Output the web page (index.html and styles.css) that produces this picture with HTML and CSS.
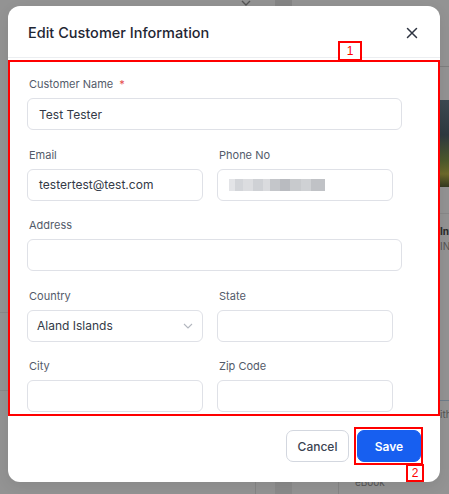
FILE: index.html
```html
<!DOCTYPE html>
<html lang="en">
<head>
<meta charset="utf-8">
<title>Edit Customer Information</title>
<link rel="stylesheet" href="styles.css">
</head>
<body>
<div class="backdrop">
  <div class="bg-top-chevron"><svg width="10" height="6" viewBox="0 0 10 6"><path d="M1 1l4 4 4-4" fill="none" stroke="#555" stroke-width="1.4"/></svg></div>
  <div class="bg-top-square"></div>
  <div class="bg-right-line1"></div>
  <div class="bg-right-image"></div>
  <div class="bg-right-line2"></div>
  <div class="bg-right-text1">Inv</div>
  <div class="bg-right-text2">IN</div>
  <div class="bg-right-line3"></div>
  <div class="bg-right-text3">ith</div>
  <div class="bg-left-line1"></div>
  <div class="bg-left-line2"></div>
  <div class="bg-bottom-col1"></div>
  <div class="bg-bottom-col2"></div>
  <div class="bg-bottom-line"></div>
  <div class="bg-bottom-text">eBook</div>
</div>

<div class="modal">
  <div class="modal-header">
    <h2 class="modal-title">Edit Customer Information</h2>
    <button class="close-btn" aria-label="Close">
      <svg width="12" height="12" viewBox="0 0 12 12"><path d="M1.5 1.5l9 9M10.5 1.5l-9 9" stroke="#2f3542" stroke-width="1.5" stroke-linecap="round"/></svg>
    </button>
  </div>
  <div class="modal-body">
    <div class="field">
      <label class="label">Customer Name <span class="req">*</span></label>
      <div class="input full">Test Tester</div>
    </div>
    <div class="row">
      <div class="field">
        <label class="label">Email</label>
        <div class="input">testertest@test.com</div>
      </div>
      <div class="field">
        <label class="label">Phone No</label>
        <div class="input"><span class="blur"></span></div>
      </div>
    </div>
    <div class="field">
      <label class="label">Address</label>
      <div class="input full"></div>
    </div>
    <div class="row">
      <div class="field">
        <label class="label">Country</label>
        <div class="input select">Aland Islands
          <svg class="chev" width="10" height="6" viewBox="0 0 10 6"><path d="M1 1l4 4 4-4" fill="none" stroke="#b3b7bf" stroke-width="1.1"/></svg>
        </div>
      </div>
      <div class="field">
        <label class="label">State</label>
        <div class="input"></div>
      </div>
    </div>
    <div class="row">
      <div class="field">
        <label class="label">City</label>
        <div class="input"></div>
      </div>
      <div class="field">
        <label class="label">Zip Code</label>
        <div class="input"></div>
      </div>
    </div>
  </div>
  <div class="modal-footer">
    <button class="btn btn-cancel">Cancel</button>
    <button class="btn btn-save">Save</button>
  </div>
</div>

<div class="anno anno-box1"></div>
<div class="anno anno-tag1">1</div>
<div class="anno anno-box2"></div>
<div class="anno anno-tag2">2</div>
</body>
</html>
```
FILE: styles.css
```css
* { box-sizing: border-box; }
html, body { margin: 0; padding: 0; }
body {
  width: 449px;
  height: 494px;
  overflow: hidden;
  background: #939393;
  font-family: Inter, "Noto Sans", sans-serif;
  position: relative;
}

/* obscured page behind the overlay */
.backdrop { position: absolute; inset: 0; }
.backdrop > * { position: absolute; }
.bg-top-chevron { left: 241px; top: 0; line-height: 0; }
.bg-top-square { left: 275px; top: 0; width: 17px; height: 6px; background: #858585; }
.bg-right-line1 { left: 440px; top: 66px; width: 9px; height: 1px; background: #7e7e7e; }
.bg-right-image { left: 440px; top: 100px; width: 9px; height: 87px;
  background: linear-gradient(180deg, #3d4a52 0%, #2e3a40 40%, #4d5a2c 70%, #6d6a2a 85%, #33381f 100%); }
.bg-right-line2 { left: 440px; top: 213px; width: 9px; height: 1px; background: #888; }
.bg-right-text1 { left: 440px; top: 225px; font: bold 10px Inter, sans-serif; color: #2a2a2a; }
.bg-right-text2 { left: 440px; top: 240px; font: 10px Inter, sans-serif; color: #555; }
.bg-right-line3 { left: 440px; top: 400px; width: 9px; height: 1px; background: #6f7c8a; }
.bg-right-text3 { left: 440px; top: 408px; font: 10px Inter, sans-serif; color: #555; }
.bg-left-line1 { left: 0; top: 312px; width: 8px; height: 1px; background: #888; }
.bg-left-line2 { left: 0; top: 390px; width: 8px; height: 1px; background: #888; }
.bg-bottom-col1 { left: 255px; top: 482px; width: 1px; height: 12px; background: #858585; }
.bg-bottom-col2 { left: 275px; top: 482px; width: 17px; height: 12px; background: #8a8a8a; }
.bg-bottom-line { left: 338px; top: 482px; width: 1px; height: 12px; background: #858585; }
.bg-bottom-text { left: 355px; top: 476px; font: 10px Inter, sans-serif; color: #555; }

/* modal */
.modal {
  position: absolute;
  left: 8px;
  top: 6px;
  width: 432px;
  height: 476px;
  background: #fff;
  border-radius: 12px;
  display: flex;
  flex-direction: column;
  overflow: hidden;
  box-shadow: 0 4px 14px rgba(0,0,0,0.08);
}
.modal-header {
  height: 52px;
  flex: none;
  display: flex;
  align-items: center;
  justify-content: space-between;
  padding: 2px 22px 0 20px;
  border-bottom: 1px solid #eceef1;
}
.modal-title {
  margin: 0;
  font-size: 14.5px;
  font-weight: 500;
  color: #1f2633;
}
.close-btn {
  border: 0;
  background: none;
  padding: 0;
  width: 12px;
  height: 12px;
  line-height: 0;
}
.modal-body {
  height: 356px;
  flex: none;
  overflow: hidden;
  padding: 18px 0 0 19px;
  display: flex;
  flex-direction: column;
  gap: 16.5px;
}
.field { display: flex; flex-direction: column; }
.row {
  display: grid;
  grid-template-columns: 176px 176px;
  column-gap: 14px;
}
.label {
  font-size: 11px;
  line-height: 16px;
  color: #535b6a;
  margin-bottom: 6px;
  margin-left: 2px;
}
.req { color: #e5484d; margin-left: 3px; }
.input {
  height: 32px;
  border: 1px solid #dfe1e7;
  border-radius: 6px;
  font-size: 12px;
  color: #333a47;
  padding: 0 11px;
  display: flex;
  align-items: center;
  background: #fff;
}
.input.full { width: 375px; }
.input.select { padding-left: 9px; justify-content: space-between; padding-right: 9px; }
.chev { flex: none; }
.blur {
  display: block;
  width: 96px;
  height: 12px;
  background: linear-gradient(90deg,
    #e3e4e7 0 6px, #d3d5d9 6px 14px, #dcdde0 14px 24px, #cfd1d5 24px 34px,
    #dadbde 34px 41px, #c4c6ca 41px 51px, #b9bbc0 51px 61px, #c8cacd 61px 72px,
    #cfd1d4 72px 82px, #c0c2c6 82px 96px);
}

.modal-footer {
  flex: 1;
  display: flex;
  justify-content: flex-end;
  align-items: flex-start;
  gap: 8px;
  padding: 16px 19px 0 0;
}
.btn {
  height: 32px;
  border-radius: 7px;
  font-family: Inter, sans-serif;
  font-size: 12px;
  font-weight: 500;
  padding: 0;
}
.btn-cancel {
  width: 63px;
  background: #fff;
  border: 1px solid #d3d7df;
  color: #3b4352;
}
.btn-save {
  width: 64px;
  background: #175ff0;
  border: 1px solid #175ff0;
  color: #fff;
  font-weight: 600;
}

/* red annotation overlays */
.anno { position: absolute; border: 2px solid #ff0000; }
.anno-box1 { left: 8px; top: 60px; width: 432px; height: 356px; }
.anno-tag1 { left: 338px; top: 41px; width: 24px; height: 20px; background: #fff;
  color: #ff0000; font: 12px "Liberation Sans", sans-serif; display: flex; align-items: center; justify-content: center; }
.anno-box2 { left: 354px; top: 427px; width: 69px; height: 38px; }
.anno-tag2 { left: 406px; top: 464px; width: 18px; height: 18px; background: #fff;
  color: #ff0000; font: 12px "Liberation Sans", sans-serif; display: flex; align-items: center; justify-content: center; }
```
